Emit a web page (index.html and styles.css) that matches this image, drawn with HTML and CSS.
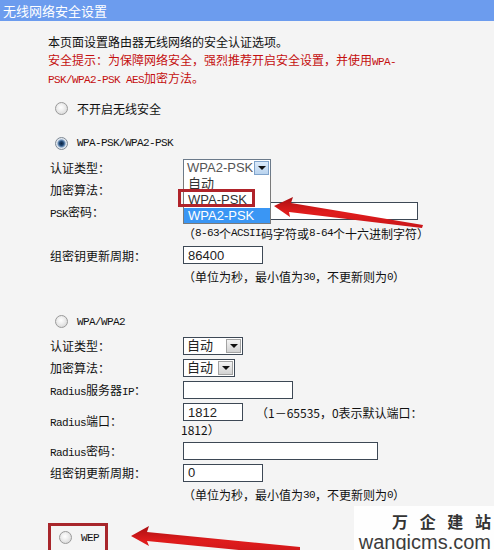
FILE: index.html
```html
<!DOCTYPE html>
<html lang="zh-CN">
<head>
<meta charset="utf-8">
<title>无线网络安全设置</title>
<link rel="stylesheet" href="styles.css">
</head>
<body>
<div class="page">
  <div class="title">无线网络安全设置</div>
  <div class="content">
    <p class="intro">本页面设置路由器无线网络的安全认证选项。</p>
    <p class="warn">安全提示：为保障网络安全，强烈推荐开启安全设置，并使用<span class="m">WPA-</span><br><span class="m">PSK/WPA2-PSK AES</span>加密方法。</p>

    <div class="radio-row r-off"><span class="radio"></span><span>不开启无线安全</span></div>

    <div class="radio-row r-psk"><span class="radio checked"></span><span class="m">WPA-PSK/WPA2-PSK</span></div>
    <div class="form form-psk">
      <div class="label">认证类型：</div>
      <div class="value">
        <div class="select sel-open w88">
          <span class="txt">WPA2-PSK</span><span class="btn btn-hot"></span>
          <div class="list">
            <div class="item">自动</div>
            <div class="item">WPA-PSK</div>
            <div class="item sel">WPA2-PSK</div>
            <div class="mark"></div>
          </div>
        </div>
      </div>
      <div class="label">加密算法：</div>
      <div class="value"></div>
      <div class="label"><span class="m">PSK</span>密码：</div>
      <div class="value"><input class="input w235" type="text" value=""></div>
      <div class="label"></div>
      <div class="value hint">（<span class="m">8-63</span>个<span class="m">ACSII</span>码字符或<span class="m">8-64</span>个十六进制字符）</div>
      <div class="label">组密钥更新周期：</div>
      <div class="value"><input class="input w80" type="text" value="86400"></div>
      <div class="label"></div>
      <div class="value hint">（单位为秒，最小值为<span class="m">30</span>，不更新则为<span class="m">0</span>）</div>
    </div>

    <div class="radio-row r-wpa"><span class="radio"></span><span class="m">WPA/WPA2</span></div>
    <div class="form form-wpa">
      <div class="label">认证类型：</div>
      <div class="value"><div class="select w60"><span class="txt">自动</span><span class="btn"></span></div></div>
      <div class="label">加密算法：</div>
      <div class="value"><div class="select w52"><span class="txt">自动</span><span class="btn"></span></div></div>
      <div class="label"><span class="m">Radius</span>服务器<span class="m">IP</span>：</div>
      <div class="value"><input class="input w110" type="text" value=""></div>
      <div class="label"><span class="m">Radius</span>端口：</div>
      <div class="value port"><div class="port-line"><input class="input w60" type="text" value="1812"><span class="port-hint">（1－65535，0表示默认端口：</span></div><div class="port-tail">1812）</div></div>
      <div class="label"><span class="m">Radius</span>密码：</div>
      <div class="value"><input class="input w195" type="text" value=""></div>
      <div class="label">组密钥更新周期：</div>
      <div class="value"><input class="input w80" type="text" value="0"></div>
      <div class="label"></div>
      <div class="value hint">（单位为秒，最小值为<span class="m">30</span>，不更新则为<span class="m">0</span>）</div>
    </div>

    <div class="wep-box"><div class="radio-row r-wep"><span class="radio"></span><span class="m">WEP</span></div></div>
  </div>

  <svg class="arrows" width="494" height="550" viewBox="0 0 494 550" aria-hidden="true">
    <defs>
      <linearGradient id="ag" x1="0" y1="0" x2="0" y2="1">
        <stop offset="0" stop-color="#a80f12"/>
        <stop offset="0.5" stop-color="#e01c1c"/>
        <stop offset="1" stop-color="#c8161a"/>
      </linearGradient>
    </defs>
    <polygon fill="url(#ag)" points="274,206 293,197 291,203 423,225 422,228 289,212 290,217"/>
    <polygon fill="url(#ag)" points="131,536 149,526 147,532 300,547 300,556 147,541 149,546"/>
  </svg>

  <div class="watermark">
    <div class="wm-cn">万 企 建 站</div>
    <div class="wm-en">wanqicms.com</div>
  </div>
</div>
</body>
</html>
```
FILE: styles.css
```css
html, body {
  margin: 0;
  padding: 0;
}
body {
  background: #f4f4f4;
  font-family: "Noto Sans CJK SC", "Noto Sans", sans-serif;
  font-size: 12px;
  color: #111;
}
.page {
  position: relative;
  width: 494px;
  height: 550px;
  overflow: hidden;
}
.title {
  height: 21px;
  line-height: 21px;
  background: #6c9cee;
  color: #fff;
  font-size: 13px;
  padding-left: 3px;
}
.content {
  padding-left: 48px;
}
.m {
  font-family: "Liberation Mono", monospace;
  font-size: 11px;
  line-height: 10px;
  letter-spacing: -0.6px;
}
.intro, .warn {
  margin: 0;
  line-height: 18px;
}
.intro {
  margin-top: 12px;
}
.warn {
  color: #c40f0f;
}
.radio-row {
  display: flex;
  align-items: center;
  height: 22px;
}
.r-off { margin-top: 10px; }
.r-psk { margin-top: 13px; }
.r-wpa { margin-top: 23px; }
.radio {
  box-sizing: border-box;
  width: 13px;
  height: 13px;
  border-radius: 50%;
  border: 1px solid #9a9a9a;
  background: radial-gradient(circle at 45% 40%, #ffffff 0, #f0f0f0 35%, #cfcfcf 100%);
  margin-left: 7px;
  margin-right: 9px;
  flex: none;
}
.radio.checked {
  border-color: #7d8894;
  background: radial-gradient(circle at 50% 50%, #0c2340 0, #1e4470 2px, #6f93bb 3.5px, #dfe6ee 4.6px, #f2f2f2 100%);
}
.form {
  display: grid;
  grid-template-columns: 135px auto;
  align-items: center;
}
.form-psk {
  margin-top: 3px;
  grid-auto-rows: 21.8px;
}
.form-wpa {
  margin-top: 2px;
  grid-template-rows: 22px 22px 22px 39px 22px 22px 22px;
}
.label {
  padding-left: 2px;
  white-space: nowrap;
}
.value {
  display: flex;
  align-items: center;
}
.hint {
  color: #111;
}
.input {
  box-sizing: border-box;
  height: 18px;
  margin: 0;
  padding: 0 4px;
  border: 1px solid #3d4855;
  border-radius: 0;
  background: #fff;
  font-family: "Liberation Sans", Arial, sans-serif;
  font-size: 13px;
  color: #222;
  outline: none;
}
.w235 { width: 235px; }
.w80 { width: 80px; }
.w110 { width: 110px; }
.w60 { width: 60px; }
.w195 { width: 195px; }
.select {
  position: relative;
  box-sizing: border-box;
  display: flex;
  height: 18px;
  border: 1px solid #3d4855;
  background: #fff;
}
.w88.select { width: 88px; border-color: #6b7a8a; }
.w60.select { width: 60px; }
.w52.select { width: 52px; }
.select .txt {
  flex: 1;
  padding-left: 3px;
  font-family: "Liberation Sans", "Noto Sans CJK SC", sans-serif;
  font-size: 13px;
  line-height: 16px;
  color: #222;
  white-space: nowrap;
  overflow: hidden;
}
.sel-open .txt { color: #555; }
.select .btn {
  box-sizing: border-box;
  width: 15px;
  margin: 1px;
  border: 1px solid #a3a3a3;
  background: linear-gradient(#f4f4f4, #d2d2d2);
  display: flex;
  align-items: center;
  justify-content: center;
}
.select .btn::after {
  content: "";
  border-left: 4px solid transparent;
  border-right: 4px solid transparent;
  border-top: 4px solid #111;
}
.select .btn-hot {
  border-color: #7fa3cb;
  background: linear-gradient(#dcebfa, #b9d3ee);
}
.list {
  position: absolute;
  top: 100%;
  left: -1px;
  width: 88px;
  box-sizing: border-box;
  background: #fff;
  border: 1px solid #7a7a7a;
  border-top: none;
}
.item {
  height: 16px;
  line-height: 16px;
  padding-left: 4px;
  font-family: "Liberation Sans", "Noto Sans CJK SC", sans-serif;
  font-size: 13px;
  color: #333;
}
.item.sel {
  height: 15px;
  line-height: 15px;
  background: #3a96f4;
  color: #fff;
}
.mark {
  position: absolute;
  left: -6px;
  top: 13px;
  width: 77px;
  height: 18px;
  box-sizing: border-box;
  border: 3px solid #b0232a;
}
.port {
  flex-direction: column;
  align-items: flex-start;
}
.port-line {
  display: flex;
  align-items: center;
  height: 20px;
}
.port-hint {
  margin-left: 13px;
}
.port-tail {
  margin-left: -2px;
  line-height: 16px;
}
.wep-box {
  box-sizing: border-box;
  margin-top: 17px;
  width: 60px;
  height: 30px;
  border: 3px solid #a8262b;
  padding-left: 1px;
  display: flex;
  align-items: center;
}
.wep-box .radio-row {
  height: 24px;
}
.arrows {
  position: absolute;
  left: 0;
  top: 0;
  pointer-events: none;
}
.watermark {
  position: absolute;
  right: 0;
  bottom: 0;
  width: 140px;
  height: 44px;
  background: rgba(255, 255, 255, 0.85);
  text-align: right;
  padding-right: 3px;
  box-sizing: border-box;
}
.wm-cn {
  font-family: "Noto Sans CJK SC", sans-serif;
  font-weight: 700;
  font-size: 16px;
  line-height: 16px;
  letter-spacing: 4px;
  margin-right: -4px;
  color: #333;
  margin-top: 7px;
}
.wm-en {
  font-family: "Liberation Sans", Arial, sans-serif;
  font-size: 20px;
  line-height: 20px;
  color: #3c3c3c;
  margin-top: 3px;
}
```
